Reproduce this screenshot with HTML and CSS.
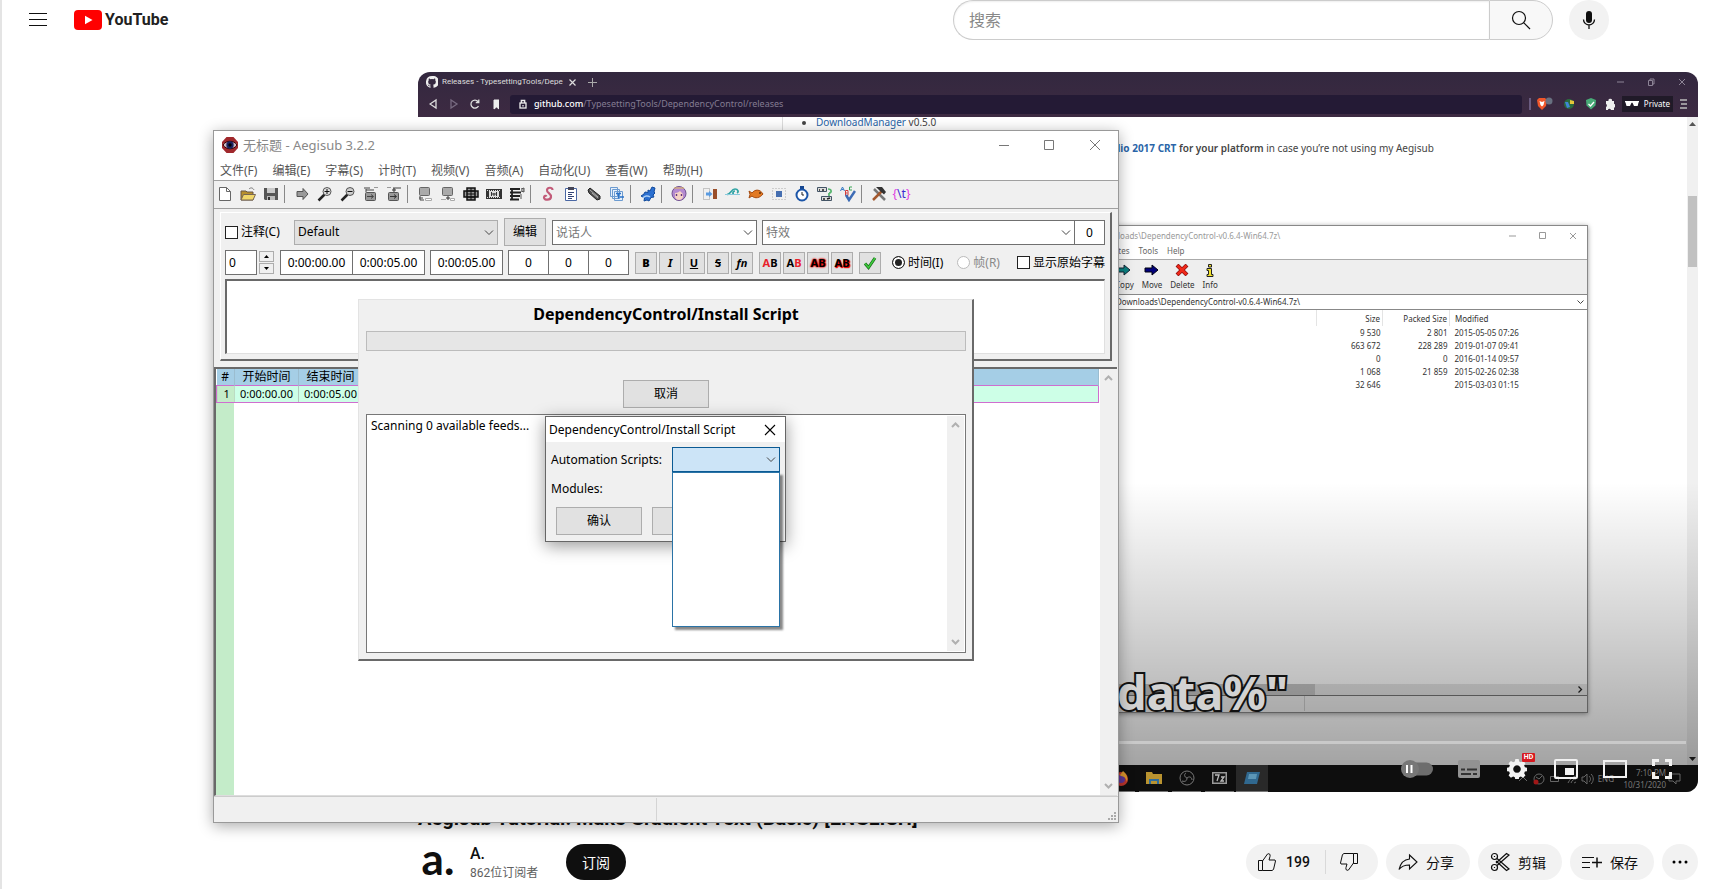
FILE: index.html
```html
<!DOCTYPE html>
<html lang="zh-CN">
<head>
<meta charset="utf-8">
<title>YouTube</title>
<link rel="stylesheet" href="styles.css">
</head>
<body>
<header class="masthead">
  <button class="plain menu-btn" aria-label="Menu"><svg width="18" height="14" viewBox="0 0 18 14"><path d="M0 .5h18M0 6.5h18M0 12.5h18" stroke="#0f0f0f" fill="none"/></svg></button>
  <a class="logo" href="#"><svg width="28" height="20" viewBox="0 0 28 20"><rect width="28" height="20" rx="4" fill="#f00"/><path d="M11 5.700v8.600l7.500-4.300z" fill="#fff"/></svg><span>YouTube</span></a>
  <form class="search">
    <input type="text" placeholder="搜索" aria-label="搜索">
    <button type="button" aria-label="搜索"><svg width="20" height="20" viewBox="0 0 20 20" fill="none" stroke="#0f0f0f" stroke-width="1.200"><circle cx="8" cy="8" r="6.500"/><path d="M12.600 12.600 19 19"/></svg></button>
  </form>
  <button class="mic" aria-label="Voice"><svg width="16" height="20" viewBox="0 0 16 20"><rect x="5" y="1" width="6" height="12" rx="3" fill="#0f0f0f"/><path d="M2.500 9.500a5.500 5.500 0 0 0 11 0M8 15v4" fill="none" stroke="#0f0f0f" stroke-width="1.300"/></svg></button>
</header>

<main class="watch">
  <section class="player">
    <div class="browser">
      <div class="tabs">
        <svg width="12" height="12" viewBox="0 0 16 16" fill="#eee"><path d="M8 0a8 8 0 0 0-2.500 15.600c.4 0 .5-.2.5-.4v-1.500C3.700 14.200 3.200 13 3.200 13c-.4-.9-.9-1.200-.9-1.200-.7-.5.1-.5.1-.5.800.1 1.200.8 1.200.8.700 1.300 1.900.9 2.400.7 0-.5.300-.9.500-1.100C4.700 11.500 2.900 10.800 2.900 7.700c0-.9.300-1.600.8-2.100-.1-.2-.4-1 .1-2.100 0 0 .7-.2 2.200.8a7.500 7.500 0 0 1 4 0c1.500-1 2.200-.8 2.200-.8.400 1.100.2 1.900.1 2.100.5.600.8 1.300.8 2.100 0 3.100-1.900 3.800-3.700 4 .3.300.6.800.6 1.500v2.200c0 .2.100.5.600.4A8 8 0 0 0 8 0z"/></svg>
        <span class="tab-title">Releases - TypesettingTools/Depe</span>
        <svg class="tab-x" width="7" height="7" viewBox="0 0 7 7" stroke="#ddd" stroke-width="1.200"><path d="M.5.5l6 6M6.500.5l-6 6"/></svg>
        <svg width="9" height="9" viewBox="0 0 9 9" stroke="#aaa"><path d="M4.500 0v9M0 4.500h9"/></svg>
        <svg class="win-ctl" width="70" height="8" viewBox="0 0 70 8" stroke="#8d8496" fill="none"><path d="M1 4h7M63 1l6 6M69 1l-6 6"/><path d="M32.500 2.500h4v5h-4zM34 2V1h4v5h-1"/></svg>
      </div>
      <div class="address">
        <svg class="nav-icons" width="70" height="12" viewBox="0 0 70 12" fill="none" stroke="#ddd" stroke-width="1.300"><path d="M7 2v8L1 6z"/><path d="M22 2v8l6-4z" stroke="#776a80"/><path d="M49 3.500A4 4 0 1 0 49.500 8M49.800 1.500v3h-3"/><path d="M65 2h5v9l-2.500-2L65 11z" fill="#eee" stroke="#eee" stroke-width="1"/></svg>
        <div class="url"><svg width="8" height="10" viewBox="0 0 8 10" fill="none" stroke="#eee" stroke-width="1.300"><rect x="1" y="4" width="6" height="5"/><path d="M2.300 4V1.500h3.400V4M4 6v1.500"/></svg><span><b>github.com</b>/TypesettingTools/DependencyControl/releases</span></div>
        <svg width="86" height="14" viewBox="0 0 86 14"><path d="M1 1v12" stroke="#9a8fc0"/><path d="M8 3l2-2h6l2 2-1 6-4 4-4-4z" fill="#f0562a"/><path d="M10.500 4l2.500 1 2.500-1-1 4-1.500 1.500L11.500 8z" fill="#fff"/><circle cx="20" cy="4" r="3.500" fill="#687080"/><circle cx="40" cy="7" r="5" fill="#2b6b3e"/><path d="M41 3l4 1v3h-4z" fill="#e6c63a"/><path d="M36 5h3l2 5-3 1z" fill="#3f86d6"/><path d="M57 3l5-2 5 2-.5 5.500-4.500 4-4.500-4z" fill="#48ab77"/><path d="M59.500 7l2 2 3.500-4" stroke="#fff" fill="none" stroke-width="1.300"/><path d="M77 4h2.500a1.800 1.800 0 1 1 3.500 0H85v3a1.700 1.700 0 1 1 0 3.400V13h-3a1.700 1.700 0 0 0-3.200 0H77v-3a1.700 1.700 0 0 0 0-3z" fill="#eee"/></svg>
        <div class="private"><svg width="14" height="6" viewBox="0 0 14 6" fill="#fff"><path d="M0 0h14v1l-.5.500-.8 3.500H9L7.500 1.800h-1L5 5H1.500L.5 1.500 0 1z"/></svg>Private</div>
        <svg width="8" height="10" viewBox="0 0 8 10" stroke="#bbb" stroke-width="1.500"><path d="M0 1h7M1 5h6M0 9h7"/></svg>
      </div>
    </div>
    <div class="page">
      <ul class="release"><li><a href="#">DownloadManager</a> v0.5.0</li></ul>
      <p class="note"><a href="#">dio 2017 CRT</a> <b>for your platform</b> in case you’re not using my Aegisub</p>
      <div class="page-scroll"><svg width="7" height="4" viewBox="0 0 7 4"><path d="M0 4l3.500-4L7 4z" fill="#555"/></svg><i></i><svg width="7" height="4" viewBox="0 0 7 4"><path d="M0 0l3.500 4L7 0z" fill="#222"/></svg></div>
    </div>
    <div class="zip">
      <div class="zip-title"><span>loads\DependencyControl-v0.6.4-Win64.7z\</span><svg width="68" height="8" viewBox="0 0 68 8" fill="none" stroke="#999"><path d="M0 4h7M61 1l6 6M67 1l-6 6M30.500.5h6v6h-6z"/></svg></div>
      <div class="zip-menu"><span>rites</span><span>Tools</span><span>Help</span></div>
      <div class="zip-tools">
        <span><svg width="16" height="12" viewBox="0 0 16 12"><path d="M1 4h7V1l6 5-6 5V8H1z" fill="#0a8080" stroke="#123"/></svg>Copy</span>
        <span><svg width="16" height="12" viewBox="0 0 16 12"><path d="M1 4h7V1l6 5-6 5V8H1z" fill="#00007c" stroke="#001"/></svg>Move</span>
        <span><svg width="14" height="12" viewBox="0 0 14 12"><path d="M2 1l10 10M12 1L2 11" stroke="#8a1010" stroke-width="4"/><path d="M2.500 1.500l9 9M11.500 1.500l-9 9" stroke="#f02818" stroke-width="2.600"/></svg>Delete</span>
        <span><svg width="10" height="13" viewBox="0 0 10 13"><path d="M3.500.5h3v2.500h-3zM2 4.500h4.500v6H8v2H2v-2h1.500v-4H2z" fill="#f2e22c" stroke="#222"/></svg>Info</span>
      </div>
      <div class="zip-path"><span>Downloads\DependencyControl-v0.6.4-Win64.7z\</span><svg width="7" height="5" viewBox="0 0 7 5"><path d="M.5.5l3 3 3-3" fill="none" stroke="#444"/></svg></div>
      <table class="zip-list">
        <thead><tr><th>Size</th><th>Packed Size</th><th>Modified</th></tr></thead>
        <tbody>
        <tr><td>9 530</td><td>2 801</td><td>2015-05-05 07:26</td></tr>
        <tr><td>663 672</td><td>228 289</td><td>2019-01-07 09:41</td></tr>
        <tr><td>0</td><td>0</td><td>2016-01-14 09:57</td></tr>
        <tr><td>1 068</td><td>21 859</td><td>2015-02-26 02:38</td></tr>
        <tr><td>32 646</td><td></td><td>2015-03-03 01:15</td></tr>
        </tbody>
      </table>
      <div class="zip-hscroll"><i></i><svg width="5" height="7" viewBox="0 0 5 7"><path d="M.5.5l3 3-3 3" fill="none" stroke="#222" stroke-width="1.300"/></svg></div>
      <div class="zip-status"><i></i></div>
    </div>
    <div class="shade"></div>
    <div class="caption">data%"</div>
    <div class="taskbar">
      <div class="apps">
        <span><svg width="18" height="18" viewBox="0 0 18 18"><circle cx="9" cy="10" r="7" fill="#b8352c"/><circle cx="9" cy="10" r="4" fill="#5a3596"/><path d="M5 4l3 2 3-4c4 3 5 7 4 11-1-4-3-6-6-6z" fill="#d6932b"/></svg></span>
        <span><svg width="16" height="14" viewBox="0 0 16 14"><path d="M0 1h6l1 2h9v10H0z" fill="#b99330"/><path d="M3 8h10v5h-2v-3H5v3H3z" fill="#2f6c9b"/></svg></span>
        <span><svg width="16" height="16" viewBox="0 0 16 16" fill="none" stroke="#777"><circle cx="8" cy="8" r="7"/><path d="M8 8C5 7 5 4 7 3M8 8c2-2 5-1 5 2M8 8c0 3-2 4-5 3"/></svg></span>
        <span><svg width="15" height="12" viewBox="0 0 15 12"><rect width="15" height="12" fill="#999"/><rect x="1.500" y="1.500" width="12" height="9" fill="#151515"/><path d="M3 3h4L5 9M9 5h3L9 9h3" stroke="#bbb" fill="none" stroke-width="1.300"/></svg></span>
        <span class="active"><svg width="16" height="12" viewBox="0 0 16 12"><path d="M3 0h13l-3 12H0z" fill="#30688f"/><path d="M5 2h8l-1 5H4z" fill="#5c96b6"/></svg></span>
      </div>
      <div class="tray">
        <svg width="110" height="16" viewBox="0 0 110 16" fill="none" stroke="#666"><path d="M1 10l4-4 4 4"/><circle cx="21" cy="8" r="5"/><path d="M21 8l3-3M21 8l-3-2"/><circle cx="18" cy="11" r="2.500" fill="#a01818" stroke="none"/><path d="M32.500 5.500h8v5h-8zM50 12c2-4 4-6 8-7M53 12c1-3 3-4 5-4M56 12l2-1"/><path d="M64 6h2l3-3v10l-3-3h-2zM71 5c2 2 2 4 0 6M73 3c3 3 3 7 0 10"/></svg>
        <span class="lang">ENG</span>
        <span class="clock">7:10 PM<br>10/31/2020</span>
        <svg width="14" height="12" viewBox="0 0 14 12" fill="none" stroke="#666"><path d="M1 1h11v7H8v3L5 8H1z"/></svg>
      </div>
    </div>
    <div class="seek"></div>
    <div class="controls">
      <button aria-label="Autoplay"><svg width="32" height="20" viewBox="0 0 32 20"><rect x="8" y="3.500" width="24" height="13" rx="6.500" fill="#6d6d6d"/><circle cx="9" cy="10" r="9" fill="#777"/><path d="M6 6v8M10.500 6v8" stroke="#fff" stroke-width="2"/></svg></button>
      <button aria-label="Subtitles"><svg width="22" height="18" viewBox="0 0 22 18"><rect width="22" height="18" rx="2" fill="#929292"/><path d="M3 9.500h4M9 9.500h10M3 14h10M15 14h4" stroke="#333" stroke-width="2"/></svg></button>
      <button class="gear" aria-label="Settings"><svg width="20" height="20" viewBox="0 0 24 24" fill="#f2f2f2"><path d="M10 1h4l.6 3 2 .9 2.700-1.500 2.800 2.800-1.500 2.700.9 2 3 .6v4l-3 .6-.9 2 1.500 2.700-2.800 2.800-2.700-1.500-2 .9-.6 3h-4l-.6-3-2-.9-2.700 1.500-2.800-2.800 1.500-2.700-.9-2-3-.6v-4l3-.6.9-2L1.900 6.200l2.800-2.800 2.700 1.500 2-.9zM12 8.500a4.500 4.500 0 1 0 .01 0z" fill-rule="evenodd" transform="translate(0 -1)"/></svg><b>HD</b></button>
      <button aria-label="Miniplayer"><svg width="24" height="20" viewBox="0 0 24 20"><rect x="1" y="1" width="22" height="18" rx="1" fill="none" stroke="#f2f2f2" stroke-width="2"/><path d="M11 9h9v7h-9z" fill="#f2f2f2"/></svg></button>
      <button aria-label="Theater mode"><svg width="24" height="18" viewBox="0 0 24 18"><rect x="1" y="1" width="22" height="16" fill="none" stroke="#f2f2f2" stroke-width="2"/></svg></button>
      <button aria-label="Full screen"><svg width="20" height="20" viewBox="0 0 20 20"><path d="M1.500 7V1.500H7M13 1.500h5.500V7M18.500 13v5.500H13M7 18.500H1.500V13" fill="none" stroke="#f2f2f2" stroke-width="3"/></svg></button>
    </div>
  </section>

  <h1 class="video-title">Aegisub Tutorial: Make Gradient Text (Basic) [ENGLISH]</h1>
  <div class="meta">
    <div class="avatar">a.</div>
    <div class="owner"><a href="#">A.</a><span>862位订阅者</span></div>
    <button class="subscribe">订阅</button>
    <div class="actions">
      <div class="pill split">
        <button><svg width="20" height="20" viewBox="0 0 20 20" fill="none" stroke="#0f0f0f"><path d="M1.500 8.500h4v10h-4zM5.500 9l5-7c2-1 3 .5 2.500 2.500L12 8h6l.5 1-2 8.500-1.500 1H5.500"/></svg>199</button>
        <button aria-label="Dislike"><svg width="20" height="20" viewBox="0 0 20 20" fill="none" stroke="#0f0f0f"><path d="M18.500 11.500h-4v-10h4zM14.500 11l-5 7c-2 1-3-.5-2.500-2.500L8 12H2l-.5-1 2-8.500L5 1.500h9.500"/></svg></button>
      </div>
      <button class="pill"><svg width="20" height="20" viewBox="0 0 20 20" fill="none" stroke="#0f0f0f" stroke-width="1.100"><path d="M11.500 3l7.500 7-7.500 7v-4C7 13 3.500 14 1 17.500 2.500 11 6 7.500 11.500 7z"/></svg>分享</button>
      <button class="pill"><svg width="20" height="20" viewBox="0 0 20 20" fill="none" stroke="#0f0f0f" stroke-width="1.200"><circle cx="4.500" cy="4.500" r="3"/><circle cx="4.500" cy="15.500" r="3"/><path d="M7 6.500l12 10.500-2.500 1.500L6 9M7 13.500L19 3l-2.500-1.500L6 11M4.500 4v1M4.500 15v1"/></svg>剪辑</button>
      <button class="pill"><svg width="20" height="20" viewBox="0 0 20 20" fill="none" stroke="#0f0f0f"><path d="M0 5.500h12M0 10.500h8M0 15.500h8"/><path d="M15 5.500v10M10 10.500h10" stroke-width="1.500"/></svg>保存</button>
      <button class="pill round" aria-label="More"><svg width="16" height="4" viewBox="0 0 16 4"><circle cx="2" cy="2" r="1.500"/><circle cx="8" cy="2" r="1.500"/><circle cx="14" cy="2" r="1.500"/></svg></button>
    </div>
  </div>
</main>

<section class="aegisub">
  <div class="titlebar">
    <svg width="16" height="16" viewBox="0 0 16 16"><path d="M4.500 0h7L16 5v6l-4.500 5h-7L0 11V5z" fill="#a0282c"/><path d="M1 8c3-5 11-5 14 0-3 5-11 5-14 0z" fill="#c9b8c0" stroke="#300"/><circle cx="8" cy="8" r="3.700" fill="#1b2260"/><circle cx="8" cy="8" r="1.700"/></svg>
    <span>无标题 - Aegisub 3.2.2</span>
    <svg class="win-btns" width="104" height="12" viewBox="0 0 104 12" fill="none" stroke="#777"><path d="M1 6.500h10M92 1l10 10M102 1L92 11M46.500 1.500h9v9h-9z"/></svg>
  </div>
  <nav class="menubar"><span>文件(F)</span><span>编辑(E)</span><span>字幕(S)</span><span>计时(T)</span><span>视频(V)</span><span>音频(A)</span><span>自动化(U)</span><span>查看(W)</span><span>帮助(H)</span></nav>
  <div class="toolbar">
    <button aria-label="New"><svg viewBox="0 0 16 16"><path d="M2.500 1.500h7l4 4v9h-11z" fill="#fff" stroke="#666"/><path d="M9.500 1.500v4h4" fill="none" stroke="#666"/></svg></button>
    <button aria-label="Open"><svg viewBox="0 0 16 16"><path d="M1 5h5l1 1h6v8H1z" fill="#b8902c" stroke="#654"/><path d="M3.500 8.500h12L13 14H1z" fill="#f1d76a" stroke="#765"/><path d="M9 3c2-2 4-1 5 1" fill="none" stroke="#777"/></svg></button>
    <button aria-label="Save"><svg viewBox="0 0 16 16"><path d="M1 2h14v12H2l-1-1z" fill="#555"/><path d="M4 2h8v5H4z" fill="#c9c9c9"/><path d="M4 10h8v4H4z" fill="#bbb"/><path d="M5 11h2v3H5z" fill="#333"/></svg></button>
    <i></i>
    <button aria-label="Jump"><svg viewBox="0 0 16 16"><path d="M3 5.500h6v-3L14 8l-5 5.500v-3H3z" fill="#999" stroke="#555"/></svg></button>
    <button aria-label="Zoom in"><svg viewBox="0 0 16 16"><path d="M1.500 14.500l6-6" stroke="#222" stroke-width="2.500"/><circle cx="10" cy="5.500" r="4" fill="#ddd" stroke="#555"/><path d="M7.500 5.500h5M10 3v5" stroke="#111"/></svg></button>
    <button aria-label="Zoom out"><svg viewBox="0 0 16 16"><path d="M1.500 14.500l6-6" stroke="#222" stroke-width="2.500"/><circle cx="10" cy="5.500" r="4" fill="#ccc" stroke="#555"/><path d="M7.500 5.500h5" stroke="#111"/></svg></button>
    <button aria-label="Video start"><svg viewBox="0 0 16 16"><path d="M1 1h6v2H1zM11 1h4v1h-4z" fill="#999"/><rect x="2.500" y="6.500" width="10" height="8" rx="1" fill="#999" stroke="#555"/><path d="M4 10.500h6M8 8.500l2.500 2L8 12.500M3 3v3M3 4h8" stroke="#444" fill="none"/></svg></button>
    <button aria-label="Video end"><svg viewBox="0 0 16 16"><path d="M1 1h4v1H1zM7 1h8v2H7z" fill="#999"/><rect x="2.500" y="6.500" width="10" height="8" rx="1" fill="#999" stroke="#555"/><path d="M4 10.500h6M8 8.500l2.500 2L8 12.500M8 2v4M6 4h4" stroke="#333" fill="none"/></svg></button>
    <i></i>
    <button aria-label="Snap start"><svg viewBox="0 0 16 16"><rect x="2.500" y="1.500" width="10" height="8" rx="1" fill="#aaa" stroke="#666"/><path d="M3 10v4h4M2 12h4" stroke="#444" fill="none"/><path d="M8.500 12.500h6v2h-6z" fill="#fff" stroke="#aaa"/></svg></button>
    <button aria-label="Snap end"><svg viewBox="0 0 16 16"><rect x="2.500" y="1.500" width="10" height="8" rx="1" fill="#aaa" stroke="#666"/><path d="M8 10v4M6 12h4" stroke="#333" fill="none"/><path d="M1 13.500h5M10.500 12.500h4v2h-4z" fill="#fff" stroke="#aaa"/></svg></button>
    <button aria-label="Select visible"><svg viewBox="0 0 16 16"><path d="M4 2h8v12H4zM1 5h14v6H1z" fill="#999" stroke="#111" stroke-width="1.500"/><path d="M4 8h8M8 2v12M4 5h8M4 11h8" stroke="#111"/></svg></button>
    <button aria-label="Snap scene"><svg viewBox="0 0 16 16"><path d="M0 3h16v10H0z" fill="#333"/><path d="M3 5h10v6H3z" fill="#ddd"/><path d="M1 4.500h14M1 11.500h14" stroke="#ddd" stroke-dasharray="1 1"/><path d="M5 8h6M5.500 6v4M8 7v3M10.500 6v4" stroke="#333"/></svg></button>
    <button aria-label="Shift"><svg viewBox="0 0 16 16"><path d="M1 3h10M1 6.500h11M1 10h10M1 13.500h9M3 2v12" stroke="#222" stroke-width="1.800"/><path d="M12 3l3-1v4l-3-1M12 8v5" stroke="#555" fill="#aaa"/></svg></button>
    <i></i>
    <button aria-label="Styles"><svg viewBox="0 0 16 16"><path d="M12.500 4c0-3-5-3-5.500 0s4.500 3.500 4 7-7 3.500-7 .5c0-2 2-2 2.500-1" fill="none" stroke="#c25a78" stroke-width="2.200"/></svg></button>
    <button aria-label="Properties"><svg viewBox="0 0 16 16"><path d="M2.500 2.500h11v12h-11z" fill="#fff" stroke="#4b68a4"/><path d="M5 1h6v3H5z" fill="#445"/><path d="M5 6.500h6M5 8.500h4M5 10.500h6M5 12.500h4" stroke="#347"/></svg></button>
    <button aria-label="Attachments"><svg viewBox="0 0 16 16"><path d="M2 4l2-2 10 8v3l-3 1L3 7z" fill="#555" stroke="#222"/><path d="M4 4l8 7M6 7l6 5" stroke="#aaa"/></svg></button>
    <button aria-label="Fonts"><svg viewBox="0 0 16 16"><path d="M1.500 1.500h7v9h-7zM3.500 3.500h7v9h-7zM5.500 5.500h8v9h-8z" fill="#e6f0fb" stroke="#6c9bd0"/><path d="M7 7.500h5M9.500 7.500v5M11 11h4" stroke="#2a72c8" stroke-width="1.400"/></svg></button>
    <i></i>
    <button aria-label="Automation"><svg viewBox="0 0 16 16"><path d="M1 10l3-2 1-2 3 .5L8 4l2 1 2-4 3 1-1 4 1 1-2 2 1 2-3 .5L9 15l-2-1-3 1 .5-3z" fill="#2b6fd0" stroke="#114a9c"/><path d="M3 12a5 5 0 0 1 7-1" fill="none" stroke="#a7ccf6" stroke-width="1.500"/></svg></button>
    <i></i>
    <button aria-label="Assistant"><svg viewBox="0 0 16 16"><circle cx="8" cy="7.500" r="7" fill="#b48ad0" stroke="#705090"/><path d="M4 7c3 0 5-2 5-2l3 3v3c-1 4-7 4-8 0z" fill="#f6d3c4"/><path d="M5.500 8v2M10.500 8v2" stroke="#63357f" stroke-width="1.400"/><path d="M3 2h10" stroke="#e4c060"/></svg></button>
    <i></i>
    <button aria-label="Shift times"><svg viewBox="0 0 16 16"><path d="M1.500 2.500h6v11h-6z" fill="none" stroke="#999" stroke-dasharray="1 1"/><path d="M11 3h4v10h-4z" fill="#9a4f2b"/><path d="M4 8h4" stroke="#5a9be0" stroke-width="3"/><path d="M7 5l3.500 3L7 11z" fill="#5a9be0"/></svg></button>
    <button aria-label="Styling"><svg viewBox="0 0 16 16"><path d="M2 8.500c4 0 4-5.500 8-5.500 3 0 4 3 2 4M9 8c-2 0-1-3 1-3" stroke="#30a4a4" fill="none" stroke-width="1.700"/><path d="M0 8.500h15" stroke="#89c9dc"/></svg></button>
    <button aria-label="Translation"><svg viewBox="0 0 16 16"><path d="M1 5l3 2c3-4 8-4 11 1-3 4-8 5-11 2l-3 2 1-3.500z" fill="#e27a24" stroke="#a54a10"/><circle cx="12" cy="7" r=".8"/></svg></button>
    <button aria-label="Resample"><svg viewBox="0 0 16 16"><path d="M1.500 2.500h13v11h-13z" fill="none" stroke="#aaa" stroke-dasharray="1 2"/><path d="M5 5h6v6H5z" fill="#456eb0"/></svg></button>
    <button aria-label="Timing"><svg viewBox="0 0 16 16"><path d="M6 0h4v3H6z" fill="#16468f"/><circle cx="8" cy="9" r="5.500" fill="#fff" stroke="#1b55a8" stroke-width="2"/><path d="M8 6v3h2" stroke="#222" fill="none"/></svg></button>
    <button aria-label="Kanji"><svg viewBox="0 0 16 16"><path d="M.5 1.500h9v4h-9zM4.500 10.500h10v4h-10z" fill="#ddd" stroke="#456"/><path d="M2 4h1M5 4h2M6 13h2M10 13l3-1" stroke="#222" stroke-width="1.500"/><path d="M11 3c4 0 4 4 1 4M12 7v3" fill="none" stroke="#55b46c" stroke-width="1.700"/></svg></button>
    <button aria-label="Spelling"><svg viewBox="0 0 16 16"><path d="M.5 5l2-4 2 4M1.500 3.500h2" stroke="#3579c5" fill="none"/><path d="M5.500 4.500h2.500v5H5.500zM5.500 7h2" fill="none" stroke="#d23c3c"/><path d="M12 1H9.500v3H12" stroke="#3aa657" fill="none"/><path d="M6 9l3 5 6-9" stroke="#3d6cb5" stroke-width="2.500" fill="none"/></svg></button>
    <i></i>
    <button aria-label="Options"><svg viewBox="0 0 16 16"><path d="M3 3l3 3 8 8" stroke="#777" stroke-width="2.500" fill="none"/><path d="M2 14l9-9" stroke="#a3582e" stroke-width="2.500"/><path d="M5 1h6l4 5-2 2.500-4-3.500z" fill="#333"/></svg></button>
    <button class="tag" aria-label="Tags"><span>{<em>\t</em>}</span></button>
  </div>

  <div class="editor">
    <div class="row one">
      <label class="check comment"><input type="checkbox">注释(C)</label>
      <span class="combo style"><select aria-label="Style"><option>Default</option></select><svg class="chev" viewBox="0 0 10 6"><path d="M1 .5l4 4 4-4"/></svg></span>
      <button class="btn edit">编辑</button>
      <span class="combo actor"><input type="text" placeholder="说话人" aria-label="说话人"><svg class="chev" viewBox="0 0 10 6"><path d="M1 .5l4 4 4-4"/></svg></span>
      <span class="combo effect"><input type="text" placeholder="特效" aria-label="特效"><svg class="chev" viewBox="0 0 10 6"><path d="M1 .5l4 4 4-4"/></svg></span>
      <input class="field count" type="text" value="0" aria-label="Characters">
    </div>
    <div class="row two">
      <input class="field layer" type="text" value="0" aria-label="Layer">
      <span class="spin"><button aria-label="Up"><svg viewBox="0 0 5 3"><path d="M0 3l2.500-3L5 3z"/></svg></button><button aria-label="Down"><svg viewBox="0 0 5 3"><path d="M0 0l2.500 3L5 0z"/></svg></button></span>
      <input class="field time" type="text" value="0:00:00.00" aria-label="Start"><input class="field time" type="text" value="0:00:05.00" aria-label="End">
      <input class="field time gap" type="text" value="0:00:05.00" aria-label="Duration">
      <input class="field num gap" type="text" value="0" aria-label="Left"><input class="field num" type="text" value="0" aria-label="Right"><input class="field num" type="text" value="0" aria-label="Vertical">
      <span class="fmt"><button><b>B</b></button><button><i>I</i></button><button><u>U</u></button><button><s>S</s></button><button><i>fn</i></button></span>
      <span class="fmt colors"><button><em>A</em>B</button><button>A<em>B</em></button><button class="glow">AB</button><button class="glow shadow">AB</button></span>
      <span class="fmt"><button aria-label="Commit"><svg width="14" height="14" viewBox="0 0 14 14"><path d="M2 7.500l3.500 4L12 2" fill="none" stroke="#176d17" stroke-width="3"/><path d="M2 7.500l3.500 4L12 2" fill="none" stroke="#3ecb3e" stroke-width="1.500"/></svg></button></span>
      <label class="check"><input type="radio" name="unit" checked>时间(I)</label>
      <label class="check frame"><input type="radio" name="unit" disabled>帧(R)</label>
      <label class="check orig"><input type="checkbox">显示原始字幕</label>
    </div>
    <textarea aria-label="Line text"></textarea>
  </div>

  <div class="grid">
    <div class="grid-body">
      <table>
        <colgroup><col class="c-num"><col class="c-time"><col class="c-time"><col></colgroup>
        <thead><tr><th>#</th><th>开始时间</th><th>结束时间</th><th></th></tr></thead>
        <tbody><tr><td>1</td><td>0:00:00.00</td><td>0:00:05.00</td><td></td></tr></tbody>
      </table>
      <div class="gutter"></div>
    </div>
    <div class="scroll"><svg viewBox="0 0 9 6"><path d="M1 5l3.500-3.500L8 5"/></svg><svg viewBox="0 0 9 6"><path d="M1 1l3.500 3.500L8 1"/></svg></div>
  </div>
  <div class="status"><span></span><span><svg width="8" height="8" viewBox="0 0 8 8" fill="#aaa"><path d="M6 0h2v2H6zM3 3h2v2H3zM6 3h2v2H6zM0 6h2v2H0zM3 6h2v2H3zM6 6h2v2H6z"/></svg></span></div>
</section>

<section class="progress-dialog">
  <h2>DependencyControl/Install Script</h2>
  <div class="bar"></div>
  <button class="btn">取消</button>
  <div class="log"><p>Scanning 0 available feeds...</p><div class="scroll"><svg viewBox="0 0 9 6"><path d="M1 5l3.500-3.500L8 5"/></svg><svg viewBox="0 0 9 6"><path d="M1 1l3.500 3.500L8 1"/></svg></div></div>
</section>

<section class="prompt">
  <div class="prompt-title"><span>DependencyControl/Install Script</span><button class="plain" aria-label="Close"><svg width="12" height="12" viewBox="0 0 12 12" stroke="#000" stroke-width="1.100"><path d="M1 1l10 10M11 1L1 11"/></svg></button></div>
  <div class="prompt-row"><label for="scripts">Automation Scripts:</label><span class="combo open"><select id="scripts"></select><svg class="chev" viewBox="0 0 10 6"><path d="M1 .5l4 4 4-4"/></svg><span class="droplist"></span></span></div>
  <div class="prompt-row"><span>Modules:</span></div>
  <div class="prompt-buttons"><button class="btn">确认</button><button class="btn" aria-label="Cancel"></button></div>
</section>
</body>
</html>
```

FILE: styles.css
```css
* { box-sizing: border-box; }
body {
  margin: 0;
  min-height: 100vh;
  position: relative;
  overflow: hidden;
  background: #fff;
  border-left: 2px solid #e4e4e4;
  color: #0f0f0f;
  font-family: Roboto, "Noto Sans CJK SC", sans-serif;
}
svg { display: block; flex: none; }
button, input, select, textarea { font: inherit; color: inherit; margin: 0; }
button { padding: 0; }
.plain { border: 0; background: none; }

/* header */
.masthead { display: flex; align-items: center; height: 40px; padding: 0 102px 0 27px; }
.logo { display: flex; align-items: center; gap: 3px; margin-left: 27px; color: #212121; text-decoration: none; font: bold 16px/20px Roboto, sans-serif; }
.search { display: flex; width: 600px; height: 40px; margin-left: auto; }
.search input { flex: 1; min-width: 0; border: 1px solid #ccc; border-right: 0; border-radius: 20px 0 0 20px; padding: 0 15px; font-size: 16px; box-shadow: inset 0 1px 2px #eee; }
.search input::placeholder { color: #888; }
.search button { width: 64px; border: 1px solid #ccc; border-radius: 0 20px 20px 0; background: #f8f8f8; display: flex; align-items: center; justify-content: center; }
.mic { width: 40px; height: 40px; margin-left: 16px; border: 0; border-radius: 50%; background: #f2f2f2; display: flex; align-items: center; justify-content: center; }

/* player */
.watch { margin: 32px 13px 0 416px; }
.player { position: relative; height: 720px; border-radius: 12px; overflow: hidden; background: #fff; font: 9px/12px "Noto Sans", sans-serif; display: flex; flex-direction: column; }
.browser { background: linear-gradient(#33283f, #3d2a42); color: #ddd; height: 45px; }
.tabs { display: flex; align-items: center; height: 20px; padding: 0 12px 0 8px; }
.tab-title { width: 124px; margin-left: 4px; white-space: nowrap; font: 8px/12px Roboto, sans-serif; }
.tab-x { margin: 0 12px 0 3px; }
.win-ctl { margin-left: auto; }
.address { display: flex; align-items: center; height: 24px; padding: 0 10px 0 11px; gap: 7px; }
.nav-icons { margin-right: 4px; }
.url { flex: 1; display: flex; align-items: center; gap: 7px; height: 19px; padding-left: 9px; background: #241a35; border-radius: 3px; color: #837a91; }
.url b { color: #fff; font-weight: 500; }
.private { display: flex; align-items: center; gap: 5px; background: #201a28; color: #fff; font-size: 8px; height: 16px; padding: 0 3px; }
.page { position: relative; flex: 1; color: #444; font-size: 10px; background: linear-gradient(90deg, transparent 364px, #ddd 364px, #ddd 365px, transparent 365px); }
.page a { color: #2a65a8; text-decoration: none; }
.release { margin: 0; padding: 0 0 0 398px; font-size: 10px; line-height: 10px; }
.note { margin: 0; padding: 14px 0 0 696px; line-height: 14px; white-space: nowrap; }
.note a { font-weight: bold; }
.note b { font-weight: 600; }
.page-scroll { position: absolute; top: 0; right: 0; bottom: 27px; width: 11px; background: #f0f0f0; display: flex; flex-direction: column; align-items: center; padding: 5px 0 4px; }
.page-scroll i { width: 9px; height: 71px; margin: 70px 0 auto; background: #c1c1c1; }

/* archive window */
.zip { position: absolute; left: 682px; right: 110px; top: 153px; height: 488px; border: 1px solid #888; background: #fff; box-shadow: 0 1px 5px #0006; color: #333; font-size: 8px; display: flex; flex-direction: column; }
.zip-title { display: flex; justify-content: space-between; align-items: center; height: 19px; padding: 0 10px 0 17px; color: #999; }
.zip-menu { display: flex; gap: 9px; height: 14px; padding-left: 12px; color: #666; }
.zip-tools { display: flex; gap: 8px; height: 35px; padding: 4px 0 0 14px; background: #eee; border-top: 1px solid #aaa; }
.zip-tools span { display: flex; flex-direction: column; align-items: center; justify-content: space-between; height: 27px; }
.zip-path { display: flex; align-items: center; justify-content: space-between; height: 16px; padding: 0 3px 0 15px; border: solid #888; border-width: 1px 0; }
.zip-list { align-self: flex-end; width: 271px; border-collapse: collapse; line-height: 13px; table-layout: fixed; }
.zip-list th { font-weight: normal; height: 16px; border-left: 1px solid #e4e4e4; }
.zip-list th, .zip-list td { padding: 0 2px; text-align: right; white-space: nowrap; }
.zip-list th:nth-child(1) { width: 66px; }
.zip-list th:nth-child(2) { width: 67px; }
.zip-list th:last-child, .zip-list td:last-child { text-align: left; padding-left: 5px; }
.zip-hscroll { display: flex; align-items: center; justify-content: space-between; height: 11px; margin-top: auto; padding-right: 4px; background: #e6e6e6; }
.zip-hscroll i { width: 214px; height: 11px; background: #c6c6c6; }
.zip-status { height: 17px; border-top: 1px solid #777; background: #f0f0f0; padding-left: 203px; }
.zip-status i { display: block; height: 15px; border-left: 1px solid #ccc; }
.shade { position: absolute; inset: 410px 0 0; background: linear-gradient(transparent, #0000002b 45%, #0000005c 92%, #000a); }
.caption { position: absolute; left: 699px; top: 590px; font: bold 47px/60px "Noto Sans", sans-serif; color: #d2d2d2; -webkit-text-stroke: 4px #111; paint-order: stroke fill; }
.taskbar { position: absolute; left: 0; right: 0; bottom: 0; height: 27px; background: #0e0e0e; color: #777; display: flex; justify-content: space-between; padding-left: 688px; }
.apps { display: flex; }
.apps span { width: 29px; margin-right: 4px; border-bottom: 1px solid #777; display: flex; align-items: center; justify-content: center; }
.apps .active { width: 32px; margin-left: -2px; background: #292929; }
.tray { display: flex; align-items: center; font-size: 8px; line-height: 12px; padding-right: 16px; }
.tray .lang { margin-left: -30px; }
.clock { width: 48px; margin: 0 2px 0 4px; text-align: right; }
.seek { position: absolute; left: 12px; right: 12px; top: 669px; height: 3px; background: #c9c9c9; }
.controls { position: absolute; right: 26px; top: 685px; height: 24px; display: flex; align-items: center; gap: 25px; }
.controls button { border: 0; background: none; }
.controls .gear { position: relative; width: 20px; margin: 0 2px; }
.gear b { position: absolute; left: 15px; top: -6px; width: 13px; background: #d71920; color: #fff; font: bold 7px/9px Roboto, sans-serif; border-radius: 1px; }

/* below the player */
.video-title { margin: 12px 0; font-size: 20px; line-height: 28px; font-weight: 700; }
.meta { display: flex; align-items: center; height: 36px; }
.avatar { width: 40px; margin-right: 12px; text-align: center; font: bold 44px/36px Lato, sans-serif; height: 44px; }
.owner { display: flex; flex-direction: column; width: 96px; padding-top: 3px; }
.owner a { color: #0f0f0f; font-weight: 500; font-size: 16px; line-height: 20px; text-decoration: none; }
.owner span { font-size: 12px; line-height: 19px; color: #606060; white-space: nowrap; }
.subscribe { width: 60px; height: 36px; border: 0; border-radius: 18px; background: #0f0f0f; color: #fff; font-size: 14px; }
.actions { display: flex; gap: 8px; margin-left: auto; }
.pill { height: 36px; border: 0; border-radius: 18px; background: #f2f2f2; display: flex; align-items: center; justify-content: center; gap: 8px; width: 84px; padding-right: 4px; font-size: 14px; }
.pill.round { width: 36px; padding: 0; }
.split { width: 132px; gap: 0; padding: 0; font-weight: 500; }
.split button { border: 0; background: none; display: flex; align-items: center; justify-content: center; gap: 9px; width: 79px; height: 24px; padding-right: 4px; }
.split button + button { width: 53px; border-left: 1px solid #d9d9d9; padding-right: 6px; }

/* desktop windows */
.aegisub, .progress-dialog, .prompt { position: absolute; font: 12px/16px "Noto Sans", "Noto Sans CJK SC", sans-serif; color: #000; }
.aegisub { left: 211px; top: 130px; width: 906px; height: 693px; border: 1px solid #999; background: #f0f0f0; box-shadow: 0 3px 14px #0005; display: flex; flex-direction: column; }
.titlebar { display: flex; align-items: center; gap: 5px; height: 28px; padding: 0 16px 0 8px; background: #fff; color: #888; font-size: 13px; }
.win-btns { margin-left: auto; }
.menubar { display: flex; gap: 15px; height: 22px; padding: 2px 6px 0; background: #fff; color: #555; line-height: 20px; border-bottom: 1px solid #a0a0a0; white-space: nowrap; }
.toolbar { display: flex; align-items: center; height: 28px; border-bottom: 1px solid #a0a0a0; padding-bottom: 2px; }
.toolbar button { width: 23px; height: 24px; border: 0; background: none; display: flex; align-items: center; justify-content: center; }
.toolbar button:first-child { width: 22px; }
.toolbar svg { width: 16px; height: 16px; }
.toolbar i { width: 8px; height: 18px; border-left: 1px solid #888; margin: 0 -2px 0 2px; }
.tag { color: #e03ce0; font-size: 12px; }
.tag em { color: #3a2ad0; font-style: normal; }
.editor { margin: 3px 6px 0 6px; height: 149px; padding: 5px 5px 5px 4px; border: 1px solid #fff; border-right: 2px solid #696969; border-bottom: 2px solid #696969; display: flex; flex-direction: column; }
.row { display: flex; align-items: center; }
.row.one { height: 28px; }
.row.two { height: 25px; margin: 4px 0; }
.check { display: flex; align-items: center; gap: 3px; white-space: nowrap; }
.check input { appearance: none; width: 13px; height: 13px; border: 1px solid #222; background: #fff; }
.check input[type=radio] { border-radius: 50%; }
.check input:checked { box-shadow: inset 0 0 0 2px #fff; background: #222; }
.check.frame { color: #8a8a8a; margin-left: 14px; }
.check.frame input { border-color: #bbb; }
.check.orig { margin-left: auto; }
.comment { width: 69px; }
.combo { position: relative; display: block; height: 25px; }
.combo select, .combo input { appearance: none; width: 100%; height: 100%; border: 1px solid #707070; border-radius: 0; background: #fff; padding: 0 3px; }
.combo input::placeholder { color: #777; }
.chev { position: absolute; right: 4px; top: 10px; width: 10px; height: 6px; fill: none; stroke: #444; pointer-events: none; }
.combo.style { width: 204px; }
.combo.style select { background: #e1e1e1; border-color: #adadad; }
.btn { border: 1px solid #adadad; background: #e1e1e1; height: 28px; width: 86px; }
.btn.edit { width: 42px; margin: 0 6px; }
.combo.actor { width: 205px; margin-right: 5px; }
.combo.effect { flex: 1; }
.field { height: 25px; border: 1px solid #707070; background: #fff; padding: 0; text-align: center; }
.count { width: 31px; margin-left: -1px; }
.layer { width: 32px; text-align: left; padding-left: 3px; }
.spin { display: flex; flex-direction: column; gap: 1px; width: 15px; margin: 0 6px 0 2px; }
.spin button { height: 11px; border: 1px solid #adadad; background: #f0f0f0; display: flex; align-items: center; justify-content: center; }
.spin svg { width: 5px; height: 3px; }
.time { width: 73px; }
.num { width: 41px; }
.time + .time, .num + .num { margin-left: -1px; }
.time.gap, .num.gap { margin-left: 5px; }
.fmt { display: flex; gap: 2px; margin-left: 6px; font: bold 11px/14px "Noto Sans", sans-serif; }
.fmt button { width: 22px; height: 22px; border: 1px solid #adadad; background: #e1e1e1; display: flex; align-items: center; justify-content: center; }
.fmt em { font-style: normal; color: #e8202a; }
.glow { text-shadow: 0 0 2px #e00, 0 0 2px #e00, 1px 0 1px #e00; }
.shadow { text-shadow: 1px 1px 1px #e00, 1px 1px 1px #e00; }
.fmt + .check { margin-left: 11px; }
textarea { flex: 1; resize: none; border: 2px solid #696969; border-right: 1px solid #e0e0e0; border-bottom: 1px solid #e0e0e0; background: #fff; }
.grid { flex: 1; display: flex; margin: 6px 1px 0 0; border: solid #696969; border-width: 2px 0 0 2px; border-bottom: 1px solid #ddd; background: #fff; }
.grid-body { flex: 1; display: flex; flex-direction: column; }
.grid table { width: 100%; table-layout: fixed; border-collapse: collapse; line-height: 16px; font-size: 11px; }
.grid th { height: 16px; padding: 0; font-weight: normal; font-size: 12px; background: #a5cee6; border-right: 1px solid #9bbdd0; }
.grid td { height: 17px; padding: 0; text-align: center; white-space: nowrap; background: #cdffe7; border: solid #cf6ecf; border-width: 1px 0; }
.grid td:nth-child(-n+3) { background-image: linear-gradient(90deg, transparent calc(100% - 1px), #b3c9bd 0); }
.grid td:first-child { background-color: #c4ecc9; border-left-width: 1px; padding-left: 2px; }
.grid td:last-child { border-right: 1px solid #cf6ecf; }
.c-num { width: 18px; }
.c-time { width: 64px; }
.gutter { flex: 1; width: 18px; background: #c4ecc9; }
.scroll { width: 17px; background: #f0f0f0; display: flex; flex-direction: column; justify-content: space-between; align-items: center; padding: 6px 0; margin-left: 1px; }
.scroll svg { width: 9px; height: 6px; fill: none; stroke: #b0b0b0; stroke-width: 2; }
.status { display: flex; height: 26px; border-top: 1px solid #ccc; }
.status span { flex: 1; display: flex; align-items: flex-end; justify-content: flex-end; padding: 2px; }
.status span:first-child { flex: none; width: 443px; margin: 1px 0; border-right: 1px solid #d4d4d4; }

.progress-dialog { left: 356px; top: 299px; width: 616px; height: 362px; background: #f0f0f0; border: solid #e3e3e3; border-width: 1px 2px 2px 1px; border-right-color: #696969; border-bottom-color: #696969; padding: 0 6px 6px 7px; display: flex; flex-direction: column; align-items: center; }
.progress-dialog h2 { margin: 3px 0 5px; font: bold 16px/23px "Noto Sans", sans-serif; }
.bar { align-self: stretch; height: 20px; background: #e6e6e6; border: 1px solid #bcbcbc; }
.progress-dialog .btn { margin: 29px 0 6px; }
.log { align-self: stretch; flex: 1; display: flex; justify-content: space-between; background: #fff; border: 1px solid #777; padding: 1px; }
.log p { margin: 1px 3px; font-size: 12px; line-height: 18px; }

.prompt { left: 543px; top: 416px; width: 241px; height: 126px; background: #f0f0f0; border: 1px solid #666; box-shadow: 0 4px 16px #0006; display: flex; flex-direction: column; }
.prompt-title { display: flex; justify-content: space-between; align-items: center; height: 25px; padding: 0 9px 0 3px; background: #fff; }
.prompt-row { display: flex; justify-content: space-between; align-items: center; height: 25px; margin: 5px 5px 0; white-space: nowrap; }
.prompt-row + .prompt-row { margin-top: 4px; }
.prompt-buttons { display: flex; gap: 10px; padding: 6px 10px; }
.combo.open { width: 108px; }
.combo.open select { background: #cce4f7; border-color: #0a5a94; }
.droplist { position: absolute; left: 0; top: 25px; width: 108px; height: 155px; background: #fff; border: 1px solid #2a73a6; box-shadow: 3px 3px 2px #0007; }
```
